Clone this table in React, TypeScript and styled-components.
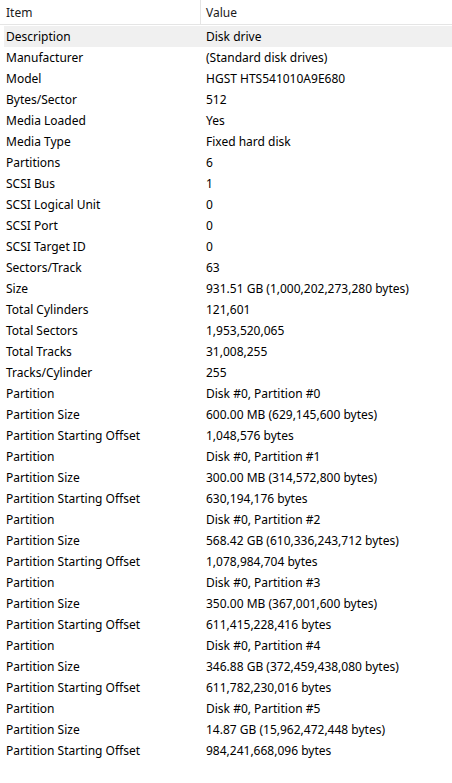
import React from "react";
import styled, { createGlobalStyle } from "styled-components";

const Global = createGlobalStyle`
  html, body { margin: 0; padding: 0; background: #ffffff; }
  body { font-family: "Noto Sans", "Segoe UI", sans-serif; }
`;

const rows: [string, string][] = [
  ["Description", "Disk drive"],
  ["Manufacturer", "(Standard disk drives)"],
  ["Model", "HGST HTS541010A9E680"],
  ["Bytes/Sector", "512"],
  ["Media Loaded", "Yes"],
  ["Media Type", "Fixed hard disk"],
  ["Partitions", "6"],
  ["SCSI Bus", "1"],
  ["SCSI Logical Unit", "0"],
  ["SCSI Port", "0"],
  ["SCSI Target ID", "0"],
  ["Sectors/Track", "63"],
  ["Size", "931.51 GB (1,000,202,273,280 bytes)"],
  ["Total Cylinders", "121,601"],
  ["Total Sectors", "1,953,520,065"],
  ["Total Tracks", "31,008,255"],
  ["Tracks/Cylinder", "255"],
  ["Partition", "Disk #0, Partition #0"],
  ["Partition Size", "600.00 MB (629,145,600 bytes)"],
  ["Partition Starting Offset", "1,048,576 bytes"],
  ["Partition", "Disk #0, Partition #1"],
  ["Partition Size", "300.00 MB (314,572,800 bytes)"],
  ["Partition Starting Offset", "630,194,176 bytes"],
  ["Partition", "Disk #0, Partition #2"],
  ["Partition Size", "568.42 GB (610,336,243,712 bytes)"],
  ["Partition Starting Offset", "1,078,984,704 bytes"],
  ["Partition", "Disk #0, Partition #3"],
  ["Partition Size", "350.00 MB (367,001,600 bytes)"],
  ["Partition Starting Offset", "611,415,228,416 bytes"],
  ["Partition", "Disk #0, Partition #4"],
  ["Partition Size", "346.88 GB (372,459,438,080 bytes)"],
  ["Partition Starting Offset", "611,782,230,016 bytes"],
  ["Partition", "Disk #0, Partition #5"],
  ["Partition Size", "14.87 GB (15,962,472,448 bytes)"],
  ["Partition Starting Offset", "984,241,668,096 bytes"],
];

const List = styled.div`
  width: 452px;
  height: 783px;
  overflow: hidden;
  background: #fff;
  font-size: 12px;
  color: #000;
`;

const Header = styled.div`
  display: grid;
  grid-template-columns: 200px 1fr;
  height: 24px;
  border-bottom: 1px solid #e5e5e5;
  margin-bottom: 1px;
`;

const HeaderCell = styled.div<{ $divider?: boolean }>`
  display: flex;
  align-items: center;
  padding-left: ${(p) => (p.$divider ? "5px" : "6px")};
  border-left: ${(p) => (p.$divider ? "1px solid #e5e5e5" : "none")};
  color: #1a1a1a;
`;

const Row = styled.div<{ $selected?: boolean }>`
  display: grid;
  grid-template-columns: 200px 1fr;
  height: 21px;
  margin-left: 4px;
  background: ${(p) => (p.$selected ? "#f0f0f0" : "transparent")};
  align-items: center;
`;

const Cell = styled.div`
  padding-left: 2px;
  white-space: nowrap;
  overflow: hidden;
`;

export default function App() {
  return (
    <>
      <Global />
      <List>
        <Header>
          <HeaderCell>Item</HeaderCell>
          <HeaderCell $divider>Value</HeaderCell>
        </Header>
        {rows.map(([k, v], i) => (
          <Row key={i} $selected={i === 0}>
            <Cell>{k}</Cell>
            <Cell>{v}</Cell>
          </Row>
        ))}
      </List>
    </>
  );
}
